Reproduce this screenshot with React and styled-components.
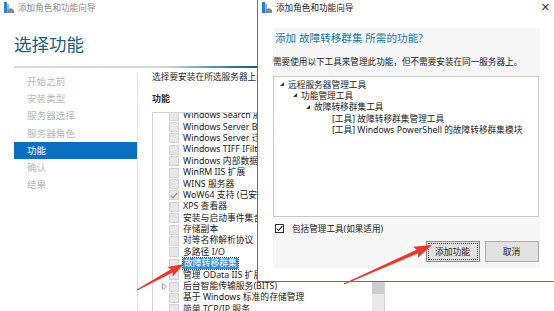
import React from "react";
import styled, { createGlobalStyle } from "styled-components";

const GlobalStyle = createGlobalStyle`
  html, body {
    margin: 0;
    padding: 0;
    background: #ffffff;
  }
  body {
    width: 554px;
    height: 311px;
    overflow: hidden;
    font-family: "Noto Sans", "Noto Sans CJK SC", sans-serif;
    color: #1e1e1e;
  }
`;

const Desktop = styled.div`
  position: relative;
  width: 554px;
  height: 311px;
  overflow: hidden;
  background: #ffffff;
`;

const Wizard = styled.div`
  display: flex;
  flex-direction: column;
  width: 554px;
  height: 311px;
`;

const TitleBar = styled.div`
  display: flex;
  align-items: center;
  height: 15px;
  padding: 0 ${(p) => (p.$closable ? "7px" : "0")} 0 4px;
  gap: 4px;
  font-size: 8.6px;
  line-height: 14px;
  color: ${(p) => (p.$active ? "#1e1e1e" : "#8a8a8a")};
  flex-shrink: 0;
`;

const CloseX = styled.span`
  margin-left: auto;
  font-size: 11px;
  line-height: 14px;
  color: #333;
  font-family: "DejaVu Sans", sans-serif;
`;

const PageHeader = styled.h1`
  margin: 17.5px 0 0 14px;
  font-size: 17.5px;
  line-height: 22px;
  font-weight: 400;
  color: #215d80;
`;

const Rule = styled.div`
  margin: 11.5px 0 0 14px;
  width: 246px;
  height: 2px;
  background: linear-gradient(
    to right,
    #dadada 0%,
    #d2d5d6 62%,
    #3c7890 88%,
    #1f5d72 100%
  );
  flex-shrink: 0;
`;

const Body = styled.div`
  display: flex;
  flex: 1;
  min-height: 0;
`;

const Nav = styled.nav`
  display: flex;
  flex-direction: column;
  width: 123px;
  margin: 5px 0 0 14px;
  border-right: 1px solid #e2e2e2;
`;

const NavItem = styled.div`
  height: 17.2px;
  line-height: 17.2px;
  padding-left: 13px;
  font-size: 9.6px;
  color: ${(p) => (p.$selected ? "#ffffff" : "#b8b8b8")};
  background: ${(p) => (p.$selected ? "#0c6ebf" : "transparent")};
`;

const Main = styled.div`
  display: flex;
  flex-direction: column;
  padding-left: 14px;
`;

const Intro = styled.div`
  margin-top: 3px;
  font-size: 8.7px;
  line-height: 12px;
  white-space: nowrap;
  color: #2a2a2a;
`;

const Label = styled.div`
  margin-top: 10px;
  font-size: 9px;
  line-height: 12px;
  font-weight: 700;
  color: #2a2a2a;
`;

const ListBox = styled.div`
  display: flex;
  margin-top: 7px;
  width: 233px;
  height: 220px;
  border: 1px solid #d6d6d6;
  box-sizing: border-box;
`;

const Rows = styled.div`
  flex: 1;
  overflow: hidden;
  display: flex;
  flex-direction: column;
  & > :first-child {
    margin-top: -3px;
  }
`;

const Row = styled.div`
  display: flex;
  align-items: center;
  height: 11.4px;
  padding-left: 6px;
  flex-shrink: 0;
  white-space: nowrap;
  font-size: 8.8px;
  color: #222;
`;

const Expander = styled.span`
  display: flex;
  align-items: center;
  justify-content: center;
  width: 10px;
  height: 10px;
`;

const ListCheck = styled.span`
  display: flex;
  align-items: center;
  justify-content: center;
  width: 10px;
  height: 10px;
  box-sizing: border-box;
  background: #e7e7e7;
  border: 1px solid #d2d2d2;
  margin-right: 4px;
`;

const ItemText = styled.span`
  line-height: 11px;
  padding: 0 ${(p) => (p.$selected ? "1px" : "0")};
  background: ${(p) => (p.$selected ? "#3b8fdc" : "transparent")};
  color: ${(p) => (p.$selected ? "#ffffff" : "inherit")};
  outline: ${(p) => (p.$selected ? "1px dotted #1b4f8a" : "none")};
`;

const ScrollBar = styled.div`
  display: flex;
  flex-direction: column;
  width: 12px;
  background: #e9e9e9;
`;

const Thumb = styled.div`
  height: 181px;
  background: #cdcdcd;
`;

const Dialog = styled.div`
  position: absolute;
  left: 257px;
  top: 0;
  width: 300px;
  height: 282px;
  box-sizing: border-box;
  display: flex;
  flex-direction: column;
  background: #ffffff;
  border-left: 1px solid #2a80d2;
  border-bottom: 1px solid #2a80d2;
`;

const Panel = styled.div`
  display: flex;
  flex-direction: column;
  margin: 13px 0 0 15px;
  width: 267px;
  height: 240px;
  box-sizing: border-box;
  padding: 3px 1.5px 6px 0;
  background: #f7f7f7;
`;

const Question = styled.div`
  margin-left: 2px;
  font-size: 10.6px;
  line-height: 14px;
  color: #1c78a6;
  white-space: nowrap;
`;

const Description = styled.div`
  margin-top: 11px;
  font-size: 8.6px;
  line-height: 12px;
  white-space: nowrap;
  color: #222;
`;

const TreeBox = styled.div`
  display: flex;
  flex-direction: column;
  margin-top: 8px;
  height: 141px;
  box-sizing: border-box;
  padding-top: 1.5px;
  background: #ffffff;
  border: 1px solid #cacaca;
`;

const TreeRow = styled.div`
  display: flex;
  align-items: center;
  height: 11.3px;
  padding-left: ${(p) => 6 + p.$indent}px;
  font-size: 8.7px;
  white-space: nowrap;
  color: #222;
`;

const Twisty = styled.span`
  flex-shrink: 0;
  width: 0;
  height: 0;
  border-bottom: 4px solid #3a3a3a;
  border-left: 4px solid transparent;
  margin-right: 4px;
`;

const CheckRow = styled.label`
  display: flex;
  align-items: center;
  gap: 8px;
  margin: 6px 0 0 2px;
  height: 10px;
  font-size: 8.6px;
  color: #222;
`;

const CheckBox = styled.span`
  display: flex;
  align-items: center;
  justify-content: center;
  width: 9px;
  height: 9px;
  box-sizing: border-box;
  background: #ffffff;
  border: 1px solid #333;
`;

const ButtonRow = styled.div`
  display: flex;
  justify-content: flex-end;
  gap: 5px;
  margin-top: 8px;
`;

const Button = styled.button`
  width: 54px;
  height: 21px;
  padding: 0;
  font-family: "Noto Sans", "Noto Sans CJK SC", sans-serif;
  font-size: 8.8px;
  color: #1e1e1e;
  background: #e1e1e1;
  border: 1px solid ${(p) => (p.$focused ? "#8c8c8c" : "#adadad")};
  outline: ${(p) => (p.$focused ? "1px dotted #444" : "none")};
  outline-offset: -3px;
`;

const ArrowLayer = styled.svg`
  position: absolute;
  left: 0;
  top: 0;
  pointer-events: none;
`;

function WizardIcon() {
  return (
    <svg width="10" height="11" viewBox="0 0 10 11">
      <rect x="0" y="0" width="3" height="11" fill="#2d7fd0" />
      <rect x="3" y="2" width="2" height="9" fill="#86b9e8" />
      <path d="M3.5 11 L3.5 8 Q6.5 4.5 10 8 L10 11 Z" fill="#7d8b98" />
    </svg>
  );
}

function Tick({ color }) {
  return (
    <svg width="8" height="7" viewBox="0 0 8 7">
      <polyline
        points="0.8,3.6 3,5.8 7.2,0.8"
        fill="none"
        stroke={color}
        strokeWidth="1.3"
      />
    </svg>
  );
}

// fat arrow as drawn by screenshot tools: thin tail, wider neck, barbed head
function arrowPoints(x1, y1, x2, y2, head, headW, tail, neck) {
  const dx = x2 - x1;
  const dy = y2 - y1;
  const len = Math.hypot(dx, dy);
  const ux = dx / len;
  const uy = dy / len;
  const nx = -uy;
  const ny = ux;
  const bx = x2 - ux * head;
  const by = y2 - uy * head;
  const pts = [
    [x1 + (nx * tail) / 2, y1 + (ny * tail) / 2],
    [bx + (nx * neck) / 2, by + (ny * neck) / 2],
    [bx + (nx * headW) / 2 - ux * 2, by + (ny * headW) / 2 - uy * 2],
    [x2, y2],
    [bx - (nx * headW) / 2 - ux * 2, by - (ny * headW) / 2 - uy * 2],
    [bx - (nx * neck) / 2, by - (ny * neck) / 2],
    [x1 - (nx * tail) / 2, y1 - (ny * tail) / 2],
  ];
  return pts.map((p) => p.map((v) => v.toFixed(1)).join(",")).join(" ");
}

const navItems = [
  "开始之前",
  "安装类型",
  "服务器选择",
  "服务器角色",
  "功能",
  "确认",
  "结果",
];

const features = [
  { text: "Windows Search 服务" },
  { text: "Windows Server Backup" },
  { text: "Windows Server 迁移工具" },
  { text: "Windows TIFF IFilter" },
  { text: "Windows 内部数据库" },
  { text: "WinRM IIS 扩展" },
  { text: "WINS 服务器" },
  { text: "WoW64 支持 (已安装)", checked: true },
  { text: "XPS 查看器" },
  { text: "安装与启动事件集合" },
  { text: "存储副本" },
  { text: "对等名称解析协议" },
  { text: "多路径 I/O" },
  { text: "故障转移群集", selected: true },
  { text: "管理 OData IIS 扩展" },
  { text: "后台智能传输服务(BITS)", expandable: true },
  { text: "基于 Windows 标准的存储管理" },
  { text: "简单 TCP/IP 服务" },
];

const tools = [
  { text: "远程服务器管理工具", indent: 0, twisty: true },
  { text: "功能管理工具", indent: 13, twisty: true },
  { text: "故障转移群集工具", indent: 26, twisty: true },
  { text: "[工具] 故障转移群集管理工具", indent: 52 },
  { text: "[工具] Windows PowerShell 的故障转移群集模块", indent: 52 },
];

export default function App() {
  return (
    <Desktop>
      <GlobalStyle />
      <Wizard>
        <TitleBar>
          <WizardIcon />
          <span>添加角色和功能向导</span>
        </TitleBar>
        <PageHeader>选择功能</PageHeader>
        <Rule />
        <Body>
          <Nav>
            {navItems.map((item) => (
              <NavItem key={item} $selected={item === "功能"}>
                {item}
              </NavItem>
            ))}
          </Nav>
          <Main>
            <Intro>选择要安装在所选服务器上的一个或多个功能。</Intro>
            <Label>功能</Label>
            <ListBox>
              <Rows>
                {features.map((f) => (
                  <Row key={f.text}>
                    <Expander>
                      {f.expandable && (
                        <svg width="5" height="7" viewBox="0 0 5 7">
                          <path
                            d="M0.5 0.5 L4.5 3.5 L0.5 6.5 Z"
                            fill="none"
                            stroke="#9a9a9a"
                            strokeWidth="0.9"
                          />
                        </svg>
                      )}
                    </Expander>
                    <ListCheck>
                      {f.checked && <Tick color="#8a8a8a" />}
                    </ListCheck>
                    <ItemText $selected={f.selected}>{f.text}</ItemText>
                  </Row>
                ))}
              </Rows>
              <ScrollBar>
                <Thumb />
              </ScrollBar>
            </ListBox>
          </Main>
        </Body>
      </Wizard>

      <Dialog>
        <TitleBar $active $closable>
          <WizardIcon />
          <span>添加角色和功能向导</span>
          <CloseX>✕</CloseX>
        </TitleBar>
        <Panel>
          <Question>添加 故障转移群集 所需的功能?</Question>
          <Description>
            需要使用以下工具来管理此功能，但不需要安装在同一服务器上。
          </Description>
          <TreeBox>
            {tools.map((t) => (
              <TreeRow key={t.text} $indent={t.indent}>
                {t.twisty && <Twisty />}
                <span>{t.text}</span>
              </TreeRow>
            ))}
          </TreeBox>
          <CheckRow>
            <CheckBox>
              <Tick color="#222" />
            </CheckBox>
            <span>包括管理工具(如果适用)</span>
          </CheckRow>
          <ButtonRow>
            <Button $focused>添加功能</Button>
            <Button>取消</Button>
          </ButtonRow>
        </Panel>
      </Dialog>

      <ArrowLayer width="554" height="311" viewBox="0 0 554 311">
        <polygon
          points={arrowPoints(137, 290, 184, 264, 14, 11, 1.2, 3.6)}
          fill="#e8392e"
        />
        <polygon
          points={arrowPoints(344, 284, 432, 245, 16, 12, 1.2, 4)}
          fill="#e8392e"
        />
      </ArrowLayer>
    </Desktop>
  );
}
